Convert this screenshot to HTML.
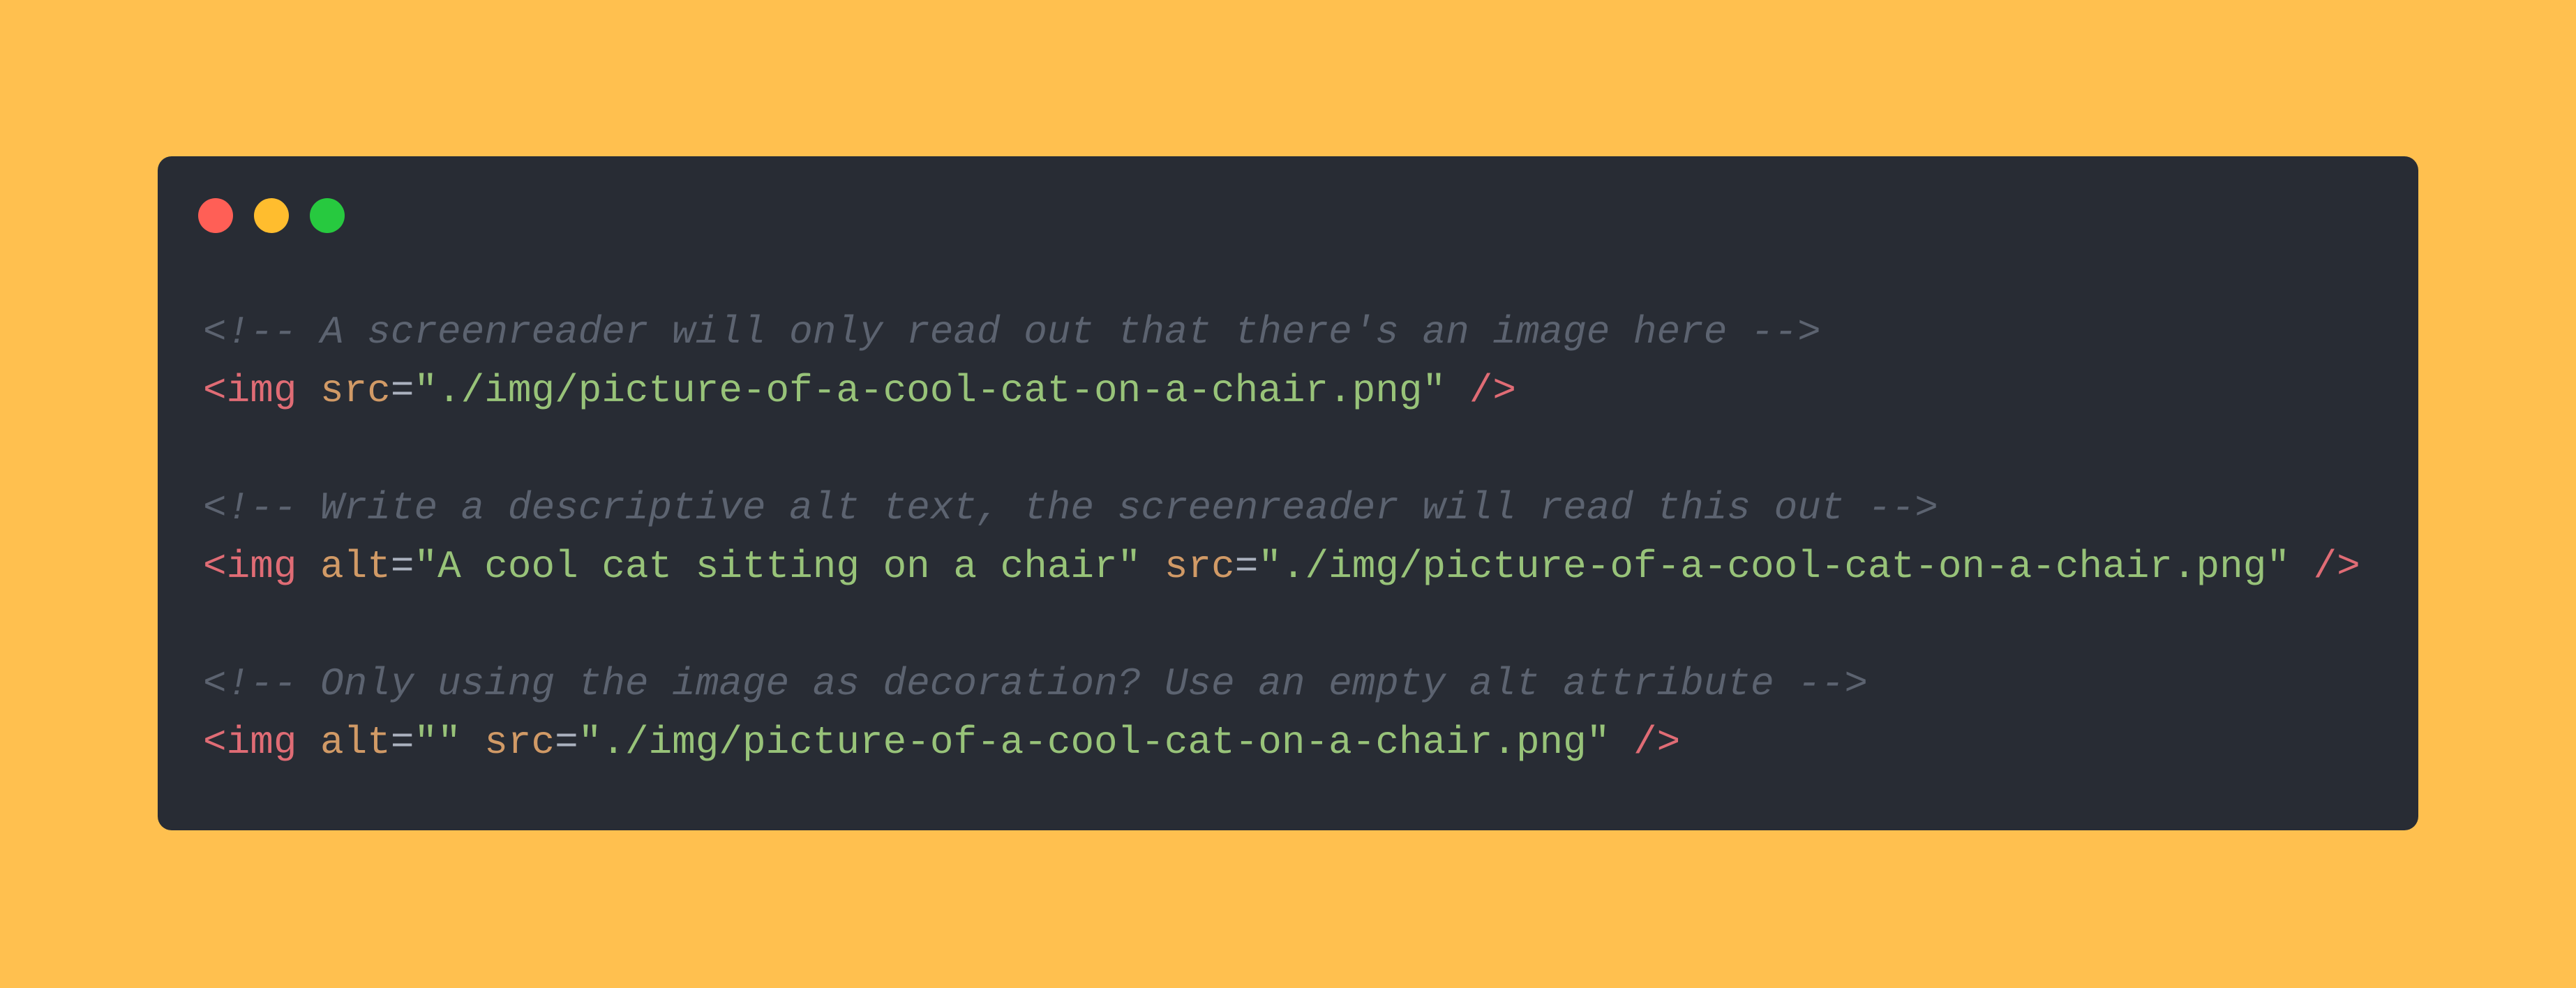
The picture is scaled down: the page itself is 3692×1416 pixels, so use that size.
<!DOCTYPE html>
<html><head><meta charset="utf-8"><style>
html,body{margin:0;padding:0}
body{width:3692px;height:1416px;background:#FFC04F;position:relative;overflow:hidden}
.card{position:absolute;left:226px;top:224px;width:3240px;height:966px;background:#282C34;border-radius:20px}
.dot{position:absolute;top:284px;width:50px;height:50px;border-radius:50%}
pre{position:absolute;left:291px;top:434px;margin:0;font-family:"Liberation Mono",monospace;font-size:56px;line-height:84px;color:#ABB2BF}
.c{color:#5C6370;font-style:italic}.t{color:#E06C75}.a{color:#D19A66}.s{color:#98C379}
</style></head><body>
<div class="card"></div>
<div class="dot" style="left:284px;background:#FF5F56"></div>
<div class="dot" style="left:364px;background:#FFBD2E"></div>
<div class="dot" style="left:444px;background:#27C93F"></div>
<pre><span class="c">&lt;!-- A screenreader will only read out that there's an image here --&gt;</span>
<span class="t">&lt;img</span> <span class="a">src</span>=<span class="s">"./img/picture-of-a-cool-cat-on-a-chair.png"</span> <span class="t">/&gt;</span>

<span class="c">&lt;!-- Write a descriptive alt text, the screenreader will read this out --&gt;</span>
<span class="t">&lt;img</span> <span class="a">alt</span>=<span class="s">"A cool cat sitting on a chair"</span> <span class="a">src</span>=<span class="s">"./img/picture-of-a-cool-cat-on-a-chair.png"</span> <span class="t">/&gt;</span>

<span class="c">&lt;!-- Only using the image as decoration? Use an empty alt attribute --&gt;</span>
<span class="t">&lt;img</span> <span class="a">alt</span>=<span class="s">""</span> <span class="a">src</span>=<span class="s">"./img/picture-of-a-cool-cat-on-a-chair.png"</span> <span class="t">/&gt;</span></pre>
</body></html>
